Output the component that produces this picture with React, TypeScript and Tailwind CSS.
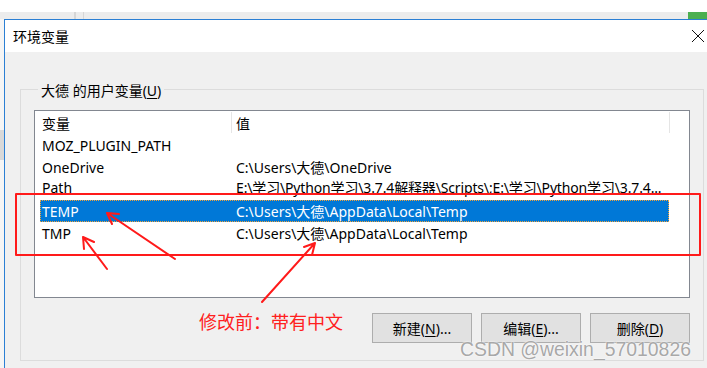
import React from 'react';

const ui = { fontFamily: '"Noto Sans", "Noto Sans CJK SC", sans-serif' };

type Row = { name: string; value: string; selected?: boolean; tight?: boolean };

const rows: Row[] = [
  { name: 'MOZ_PLUGIN_PATH', value: '' },
  { name: 'OneDrive', value: 'C:\\Users\\大德\\OneDrive' },
  { name: 'Path', value: 'E:\\学习\\Python学习\\3.7.4解释器\\Scripts\\;E:\\学习\\Python学习\\3.7.4...', tight: true },
  { name: 'TEMP', value: 'C:\\Users\\大德\\AppData\\Local\\Temp', selected: true },
  { name: 'TMP', value: 'C:\\Users\\大德\\AppData\\Local\\Temp' },
];

function WinButton({ label, hot, tail }: { label: string; hot: string; tail: string }) {
  return (
    <button className="w-[100px] h-[30px] bg-[#e1e1e1] border border-[#adadad] text-[14px] text-black flex items-center justify-center">
      <span>
        {label}(<span className="underline underline-offset-2">{hot}</span>){tail}
      </span>
    </button>
  );
}

export default function App() {
  return (
    <div className="relative w-[707px] h-[368px] overflow-hidden bg-white" style={ui}>
      {/* window behind the dialog */}
      <div className="h-[12px] bg-white" />
      <div className="h-[7px] bg-[#ececec] flex">
        <div className="w-[74px]" />
        <div className="w-[2px] bg-[#d6d6d6]" />
        <div className="w-[7px]" />
        <div className="w-[1px] bg-[#d6d6d6]" />
        <div className="flex-1" />
        <div className="w-[19px] bg-[#4caf50]" />
      </div>

      <div className="flex h-[349px]">
        <div className="w-[4px] bg-[#f5f5f5] flex flex-col">
          <div className="h-[111px]" />
          <div className="h-[30px] bg-[#d9d9d9]" />
          <div className="flex-1" />
        </div>

        <div className="flex-1 flex flex-col border-l border-t border-[#2b7fd4]">
          {/* title bar */}
          <div className="h-[32px] bg-white flex items-center justify-between pl-[8px] pr-[2px]">
            <span className="text-[14px] text-black">环境变量</span>
            <svg width="14" height="14" viewBox="0 0 14 14">
              <path d="M1 1 L13 13 M13 1 L1 13" stroke="#111" strokeWidth="1" fill="none" />
            </svg>
          </div>

          {/* client area */}
          <div className="flex-1 bg-[#f0f0f0] pl-[15px] pr-[3px]">
            <fieldset className="mt-[27px] border border-[#dcdcdc] px-[13px] pb-[17px]">
              <legend className="ml-[4px] px-[3px] pt-[4px] leading-[16px] text-[14px] text-black">
                大德 的用户变量(<span className="underline underline-offset-2">U</span>)
              </legend>

              <div className="mt-[11px] h-[188px] bg-white border border-[#828790] text-[14px] text-black">
                <div className="h-[23px] flex items-stretch">
                  <div className="w-[196px] pl-[7px] pt-[1px] flex items-center">变量</div>
                  <div className="w-[1px] my-[1px] bg-[#e5e5e5]" />
                  <div className="w-[437px] pl-[4px] pt-[1px] flex items-center">值</div>
                  <div className="w-[1px] my-[1px] bg-[#e5e5e5]" />
                </div>
                {rows.map((r) => (
                  <div
                    key={r.name}
                    className={
                      r.selected
                        ? 'ml-[5px] w-[629px] h-[22px] flex items-center bg-[#0078d7] text-white outline outline-1 outline-dotted outline-[#f2a33a] -outline-offset-1'
                        : r.tight
                          ? 'ml-[5px] w-[629px] h-[22px] pb-[4px] flex items-center'
                          : 'ml-[5px] w-[629px] h-[22px] flex items-center'
                    }
                  >
                    <div className="w-[196px] shrink-0 pl-[2px] whitespace-nowrap">{r.name}</div>
                    <div className={r.tight ? 'min-w-0 flex-1 whitespace-nowrap overflow-hidden tracking-[-0.15px]' : 'min-w-0 flex-1 whitespace-nowrap overflow-hidden'}>
                      {r.value}
                    </div>
                  </div>
                ))}
              </div>

              <div className="mt-[15px] flex justify-end gap-[9px]">
                <WinButton label="新建" hot="N" tail="..." />
                <WinButton label="编辑" hot="E" tail="..." />
                <WinButton label="删除" hot="D" tail="" />
              </div>
            </fieldset>
          </div>
        </div>
      </div>

      {/* red annotations drawn over the screenshot */}
      <svg className="absolute inset-0 pointer-events-none" width="707" height="368">
        <g stroke="#ff1a1a" strokeWidth="2" fill="none" strokeLinecap="round" strokeLinejoin="round">
          <rect x="16" y="194" width="684" height="61" />
          <path d="M175 259 L107 213 M112 224 L107 213 L119 214" />
          <path d="M107 269 L83 237 M84 249 L83 237 L94 242" />
          <path d="M262 302 L315 243 M304 247 L315 243 L312 255" />
        </g>
      </svg>
      <div className="absolute left-[199px] top-[310px] text-[18px] leading-[24px] text-[#ff2020]">
        修改前：带有中文
      </div>
      <div
        className="absolute left-[460px] top-[337px] text-[19.4px] leading-[24px] text-[#a8a8a8]"
        style={{ fontFamily: '"Liberation Sans", Arial, sans-serif', textShadow: '0 0 2px #fff, 0 0 1px #fff' }}
      >
        CSDN @weixin_57010826
      </div>
    </div>
  );
}
